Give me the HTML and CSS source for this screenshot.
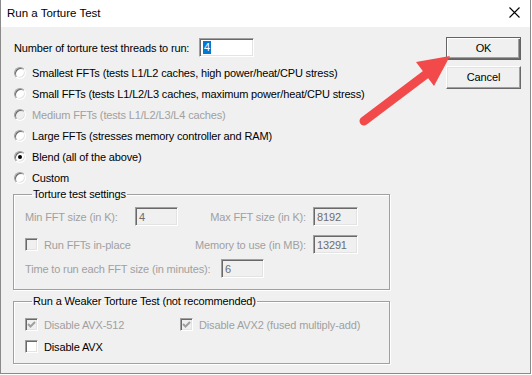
FILE: index.html
```html
<!DOCTYPE html>
<html>
<head>
<meta charset="utf-8">
<link rel="stylesheet" href="styles.css">
</head>
<body>
<div class="win">
  <div class="titlebar">
    <span class="title">Run a Torture Test</span>
    <svg class="close" width="11" height="11" viewBox="0 0 11 11"><path d="M0.5 0.5 L10.5 10.5 M10.5 0.5 L0.5 10.5" stroke="#000" stroke-width="1.1" fill="none"/></svg>
  </div>
  <div class="client">
    <div class="main">
      <div class="threads">
        <span class="threads-label">Number of torture test threads to run:</span>
        <span class="edit threads-edit"><span class="sel">4</span></span>
      </div>
      <div class="radios">
        <div class="radio"><span class="rb"></span><span>Smallest FFTs (tests L1/L2 caches, high power/heat/CPU stress)</span></div>
        <div class="radio"><span class="rb"></span><span>Small FFTs (tests L1/L2/L3 caches, maximum power/heat/CPU stress)</span></div>
        <div class="radio disabled"><span class="rb"></span><span>Medium FFTs (tests L1/L2/L3/L4 caches)</span></div>
        <div class="radio"><span class="rb"></span><span>Large FFTs (stresses memory controller and RAM)</span></div>
        <div class="radio"><span class="rb checked"></span><span>Blend (all of the above)</span></div>
        <div class="radio"><span class="rb"></span><span>Custom</span></div>
      </div>
      <fieldset class="group g1">
        <legend>Torture test settings</legend>
        <div class="row r1">
          <span class="dlabel l-min">Min FFT size (in K):</span>
          <span class="edit dis e-small">4</span>
          <span class="dlabel l-right">Max FFT size (in K):</span>
          <span class="edit dis e-wide">8192</span>
        </div>
        <div class="row r2">
          <span class="check-item c-inplace dlabel"><span class="cb dis"></span>Run FFTs in-place</span>
          <span class="dlabel l-right">Memory to use (in MB):</span>
          <span class="edit dis e-wide">13291</span>
        </div>
        <div class="row r3">
          <span class="dlabel l-time">Time to run each FFT size (in minutes):</span>
          <span class="edit dis e-small">6</span>
        </div>
      </fieldset>
      <fieldset class="group g2">
        <legend>Run a Weaker Torture Test (not recommended)</legend>
        <div class="row w1">
          <span class="check-item c-512 dlabel"><span class="cb dis"><svg width="9" height="9" viewBox="0 0 9 9"><path d="M1 4 L3.5 6.5 L8 2" stroke="#a0a0a0" stroke-width="2" fill="none"/></svg></span>Disable AVX-512</span>
          <span class="check-item dlabel"><span class="cb dis"><svg width="9" height="9" viewBox="0 0 9 9"><path d="M1 4 L3.5 6.5 L8 2" stroke="#a0a0a0" stroke-width="2" fill="none"/></svg></span>Disable AVX2 (fused multiply-add)</span>
        </div>
        <div class="row w2">
          <span class="check-item"><span class="cb"></span>Disable AVX</span>
        </div>
      </fieldset>
    </div>
    <div class="buttons">
      <div class="btn default"><span class="btn-in">OK</span></div>
      <div class="btn"><span class="btn-in">Cancel</span></div>
    </div>
  </div>
  <svg class="arrow" width="531" height="374" viewBox="0 0 531 374">
    <line x1="363" y1="121" x2="428" y2="72" stroke="#f24a4a" stroke-width="9" stroke-linecap="round"/>
    <polygon points="449,56 415,62 433,86" fill="#f24a4a"/>
  </svg>
</div>
</body>
</html>
```
FILE: styles.css
```css
html, body {
  margin: 0;
  padding: 0;
  background: #ffffff;
}
body {
  font-family: "Liberation Sans", Arial, sans-serif;
  font-size: 11px;
  letter-spacing: -0.15px;
  color: #000;
}
.win {
  position: relative;
  width: 531px;
  height: 374px;
  box-sizing: border-box;
  border: 1px solid #8a8a8a;
  border-top: none;
  display: flex;
  flex-direction: column;
  background: #f0f0f0;
}
.titlebar {
  height: 27px;
  flex: none;
  background: #fff;
  display: flex;
  align-items: center;
  justify-content: space-between;
  padding: 0 10px 0 6px;
}
.title {
  font-size: 11.5px;
  letter-spacing: 0;
  padding-bottom: 1px;
}
.close {
  display: block;
  margin-bottom: 2px;
}
.client {
  flex: 1;
  display: flex;
  background: #f0f0f0;
}
.main {
  padding-left: 12px;
  width: 377px;
}
.threads {
  display: flex;
  align-items: center;
  margin-top: 11px;
  padding-left: 1px;
  height: 19px;
}
.threads-label {
  width: 185px;
}
.edit {
  box-sizing: border-box;
  height: 19px;
  display: inline-flex;
  align-items: center;
  padding-left: 3px;
  border: 1px solid;
  border-color: #a0a0a0 #ffffff #ffffff #a0a0a0;
  box-shadow: inset 1px 1px 0 #696969, inset -1px -1px 0 #e3e3e3;
  background: #fff;
  flex: none;
}
.threads-edit {
  width: 55px;
}
.sel {
  background: #0078d7;
  color: #fff;
  padding: 0 1px;
  line-height: 13px;
}
.edit.dis {
  background: #f0f0f0;
  color: #6d6d6d;
}
.radios {
  margin-top: 5px;
}
.radio {
  display: flex;
  align-items: center;
  height: 21px;
  padding-left: 1px;
}
.radio.disabled {
  color: #a0a0a0;
}
.rb {
  box-sizing: border-box;
  width: 12px;
  height: 12px;
  border-radius: 50%;
  border: 1px solid;
  border-color: #a0a0a0 #ffffff #ffffff #a0a0a0;
  box-shadow: inset 1px 1px 0 #696969, inset -1px -1px 0 #e3e3e3;
  background: #fff;
  margin-right: 6px;
  display: flex;
  align-items: center;
  justify-content: center;
  flex: none;
}
.radio.disabled .rb {
  background: #f0f0f0;
}
.rb.checked::after {
  content: "";
  width: 4px;
  height: 4px;
  border-radius: 50%;
  background: #000;
}
.group {
  box-sizing: border-box;
  width: 377px;
  margin: 0;
  padding: 0 11px;
  border: 1px solid #a0a0a0;
  box-shadow: 1px 1px 0 #fff, inset 1px 1px 0 #fff;
  min-inline-size: 0;
}
.group legend {
  padding: 0 1px;
  margin-left: 7px;
  line-height: 12px;
}
.g1 {
  padding-bottom: 11px;
}
.g2 {
  margin-top: 5px;
  padding-bottom: 7px;
}
.row {
  display: flex;
  align-items: center;
  height: 19px;
}
.r1 { margin-top: 7px; }
.r2 { margin-top: 9px; }
.r3 { margin-top: 5px; }
.w1 { margin-top: 8px; }
.w2 { margin-top: 3px; }
.dlabel {
  color: #a0a0a0;
}
.l-min {
  width: 110px;
}
.e-small {
  width: 43px;
}
.e-wide {
  width: 45px;
}
.l-right {
  width: 135px;
  text-align: right;
  padding-right: 7px;
  box-sizing: border-box;
}
.c-inplace {
  width: 153px;
}
.l-time {
  width: 196px;
}
.check-item {
  display: flex;
  align-items: center;
}
.c-512 {
  width: 155px;
}
.cb {
  box-sizing: border-box;
  width: 13px;
  height: 13px;
  border: 1px solid;
  border-color: #a0a0a0 #ffffff #ffffff #a0a0a0;
  box-shadow: inset 1px 1px 0 #696969, inset -1px -1px 0 #e3e3e3;
  background: #fff;
  margin-right: 6px;
  display: flex;
  align-items: center;
  justify-content: center;
  flex: none;
}
.cb.dis {
  background: #f0f0f0;
}
.cb svg {
  display: block;
}
.buttons {
  margin-left: auto;
  margin-right: 9px;
  padding-top: 10px;
  width: 75px;
}
.btn {
  box-sizing: border-box;
  height: 23px;
  border: 1px solid;
  border-color: #ffffff #696969 #696969 #ffffff;
  box-shadow: inset -1px -1px 0 #a0a0a0, inset 1px 1px 0 #e3e3e3;
  background: #f0f0f0;
  display: flex;
  align-items: center;
  justify-content: center;
  margin-bottom: 6px;
}
.btn.default {
  border: 1px solid #646464;
  box-shadow: inset 1px 1px 0 #ffffff, inset -1px -1px 0 #696969, inset -2px -2px 0 #a0a0a0;
}
.btn-in {
  padding-bottom: 1px;
}
.arrow {
  position: absolute;
  left: 0;
  top: 0;
  pointer-events: none;
}
```
